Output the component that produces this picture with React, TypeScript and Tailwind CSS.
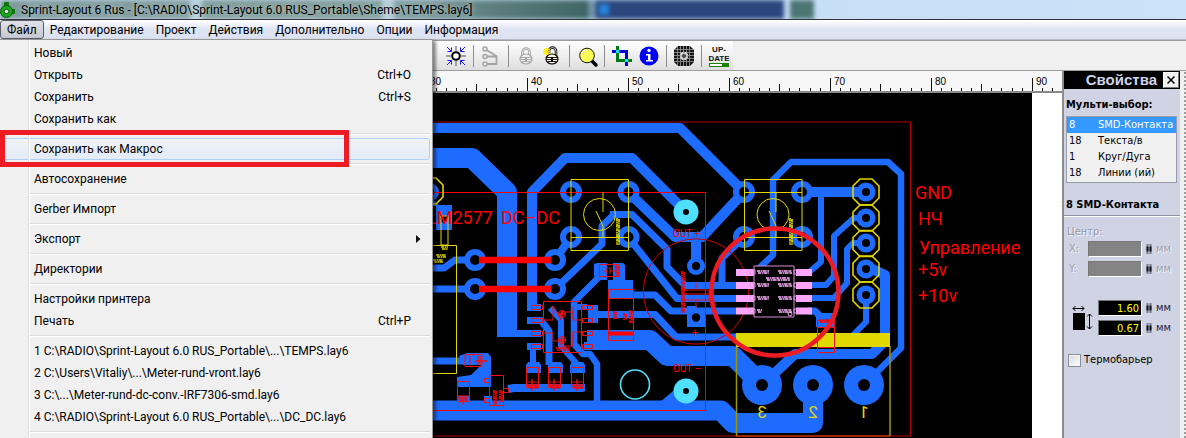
import type { ReactNode } from "react";

const menuBar = ["Файл", "Редактирование", "Проект", "Действия", "Дополнительно", "Опции", "Информация"];

type Item = { label: string; keys?: string; sub?: boolean; active?: boolean };

const fileMenu: Item[][] = [
  [
    { label: "Новый" },
    { label: "Открыть", keys: "Ctrl+O" },
    { label: "Сохранить", keys: "Ctrl+S" },
    { label: "Сохранить как" },
  ],
  [{ label: "Сохранить как Макрос", active: true }],
  [{ label: "Автосохранение" }],
  [{ label: "Gerber Импорт" }],
  [{ label: "Экспорт", sub: true }],
  [{ label: "Директории" }],
  [{ label: "Настройки принтера" }, { label: "Печать", keys: "Ctrl+P" }],
  [
    { label: "1 C:\\RADIO\\Sprint-Layout 6.0 RUS_Portable\\...\\TEMPS.lay6" },
    { label: "2 C:\\Users\\Vitaliy\\...\\Meter-rund-vront.lay6" },
    { label: "3 C:\\...\\Meter-rund-dc-conv.-IRF7306-smd.lay6" },
    { label: "4 C:\\RADIO\\Sprint-Layout 6.0 RUS_Portable\\...\\DC_DC.lay6" },
  ],
];

const selection = [
  ["8", "SMD-Контакта"],
  ["18", "Текста/в"],
  ["1", "Круг/Дуга"],
  ["18", "Линии (ий)"],
];

const BLUE = "#1e6bff";
const RED = "#f00";
const YEL = "#e0d800";

function TitleBar() {
  return (
    <header className="relative flex h-5 shrink-0 items-center overflow-hidden border-b border-[#30363c] bg-gradient-to-r from-[#cfe4f8] via-[#c3dcf6] to-[#cbe2f8]">
      <div className="absolute inset-0 flex blur-[2px]" aria-hidden="true">
        <div className="w-[190px] bg-[#7d999c]" />
        <div className="w-3 bg-[#b4cbd4]" />
        <div className="w-[180px] bg-[#7c9a97]" />
        <div className="w-3 bg-[#b4cbd4]" />
        <div className="w-[194px] bg-gradient-to-r from-[#7c9a9b] to-[#3f6664]" />
        <div className="w-[8px] bg-[#7090a8]" />
        <div className="w-[188px] bg-[#2b477c]" />
        <div className="w-[6px]" />
        <div className="w-[24px] bg-[#4c7673]" />
      </div>
      <div className="absolute inset-y-1 left-[599px] w-[10px] bg-[#2484dc] blur-[2px]" aria-hidden="true" />
      <svg className="relative shrink-0" width="16" height="18" viewBox="0 0 16 18" aria-hidden="true">
        <rect x="4" y="1" width="5" height="7" rx="1" fill="#0a7a0a" />
        <rect x="9" y="8" width="6" height="5" fill="#0a7a0a" />
        <circle cx="6.500" cy="10.500" r="6" fill="#18a818" stroke="#075b07" />
        <circle cx="6.500" cy="10.500" r="2.200" fill="#fff" stroke="#075b07" />
      </svg>
      <h1 className="relative ml-[5px] whitespace-nowrap text-[12px] leading-[18px] text-black [text-shadow:0_0_6px_#dfeaea]">
        Sprint-Layout 6 Rus - [C:\RADIO\Sprint-Layout 6.0 RUS_Portable\Sheme\TEMPS.lay6]
      </h1>
    </header>
  );
}

function FileMenu() {
  return (
    <div
      role="menu"
      aria-label="Файл"
      className="absolute left-0 top-[39px] z-10 w-[433px] border border-l-0 border-[#979797] bg-[#f0f0f0] pb-[5px] pr-[2px] pt-[2px] shadow-[3px_2px_3px_rgba(0,0,0,0.45)]"
    >
      {fileMenu.map((group, g) => (
        <div key={g}>
          {group.map((it) => (
            <button
              key={it.label}
              role="menuitem"
              className={
                it.active
                  ? "flex h-[22px] w-full items-center rounded-[3px] border border-[#aecff7] bg-gradient-to-b from-[#f0f3f8] to-[#e3ebf6] pl-[33px] pr-[18px] text-left"
                  : "flex h-[22px] w-full items-center pl-[34px] pr-[19px] text-left"
              }
            >
              <span className="flex-1 whitespace-nowrap">{it.label}</span>
              {it.keys && <span>{it.keys}</span>}
              {it.sub && (
                <svg className="-mr-[10px]" width="5" height="8" viewBox="0 0 5 8" aria-hidden="true">
                  <path d="M0 0L4.500 4L0 8Z" fill="#111" />
                </svg>
              )}
            </button>
          ))}
          <div className="flex h-2 items-center pl-[30px]">
            <div className="h-[2px] w-full border-b border-t border-b-white border-t-[#dcdcdc]" />
          </div>
        </div>
      ))}
      <div className="pointer-events-none absolute inset-y-0 left-[28px] w-[2px] border-l border-r border-l-[#dfdfdf] border-r-white" />
    </div>
  );
}

function Tool({ label, children }: { label: string; children: ReactNode }) {
  return (
    <button aria-label={label} className="flex h-6 w-6 items-center justify-center">
      <svg width="24" height="24" viewBox="0 0 24 24" fill="none" aria-hidden="true">
        {children}
      </svg>
    </button>
  );
}

const Sep = () => <div className="mx-[5px] h-[22px] w-px bg-[#8c8c8c]" />;

function Padlock({ color, body, open }: { color: string; body: string; open?: boolean }) {
  const shackle = open ? "M9 9V7a3.500 3.500 0 0 1 7 0v5" : "M8.500 12V8a3.500 3.500 0 0 1 7 0v4";
  return (
    <>
      <path d={shackle} stroke={color} strokeWidth="2.500" />
      <path d={shackle} stroke={body} strokeWidth=".8" />
      <ellipse cx="12" cy="15" rx="6" ry="5" fill={body} stroke={color} strokeWidth="1.200" />
      <path d="M6.500 13.500h11M6.500 15.500h11M7.500 17.500h9" stroke={color} strokeWidth=".9" />
      <path d="M12 13v5" stroke={color} strokeWidth="2" />
    </>
  );
}

function Toolbar() {
  return (
    <div className="flex h-[31px] shrink-0 items-stretch border-b border-t border-b-[#9c9c9c] border-t-[#9c9c9c] bg-[#f0f0f0]">
      <div className="flex items-center bg-gradient-to-b from-white to-[#dedede] pl-[444px] pr-[2px]">
        <Tool label="Центр">
          <path d="M12 2v5M12 17v5M2 12h5M17 12h5" stroke="#555" />
          <circle cx="12" cy="12" r="3.800" fill="#fff" stroke="#000" strokeWidth="2" />
          <path
            d="M3 3l4 4M7.500 3.500v4h-4M21 3l-4 4M16.500 3.500v4h4M3 21l4-4M7.500 20.500v-4h-4M21 21l-4-4M16.500 20.500v-4h4"
            stroke="#1414ff"
          />
        </Tool>
        <Sep />
        <Tool label="Трасса">
          <path d="M6 5l9 5.500M6 12.500h11.500V20H6" stroke="#a3a3a3" strokeWidth="1.800" />
          <path d="M15 10.500l2.500 2" stroke="#a3a3a3" strokeWidth="1.800" />
          <g fill="#eee" stroke="#a3a3a3" strokeWidth="1.500">
            <circle cx="6" cy="5" r="2" />
            <circle cx="6" cy="12.500" r="2" />
            <circle cx="6" cy="20" r="2" />
          </g>
        </Tool>
        <Sep />
        <Tool label="Блокировать">
          <Padlock color="#a3a3a3" body="#eee" />
        </Tool>
        <div className="w-[2px]" />
        <Tool label="Разблокировать">
          <Padlock color="#000" body="#fffbe0" open />
          <path d="M3 7.500h7M6.500 4v7M4 5l5 5M9 5l-5 5" stroke="#ffe600" strokeWidth="1.200" />
        </Tool>
        <Sep />
        <Tool label="Масштаб">
          <path d="M16 16l5 5" stroke="#000" strokeWidth="3.500" strokeLinecap="round" />
          <circle cx="12" cy="11.500" r="7.300" fill="#ffff5a" stroke="#111" />
          <path d="M7 9q2-3 5-3" stroke="#fff" />
        </Tool>
        <Sep />
        <Tool label="Обрезка">
          <path d="M2 7.500h14.500v10" stroke="#0000d8" strokeWidth="3" />
          <path d="M7.500 2v14.500H22" stroke="#007a18" strokeWidth="3" />
          <path d="M2 7.500h4M16.500 18v4" stroke="#0000d8" strokeWidth="3" />
          <path d="M6 6h3v3H6zM15 15h3v3h-3z" fill="#00f0ff" />
        </Tool>
        <div className="w-[3px]" />
        <Tool label="Информация">
          <circle cx="12" cy="12" r="9.500" fill="#0000f5" />
          <circle cx="12" cy="6.500" r="1.700" fill="#fff" />
          <path d="M9 10h4.500v6H16v1.500H9V16h2v-4.500H9z" fill="#fff" />
        </Tool>
        <Sep />
        <Tool label="Шаблон">
          <path d="M6 2h12l4 4v12l-4 4H6l-4-4V6z" fill="#161616" />
          <path
            d="M5.500 2v20M8.500 2v20M11.500 2v20M14.500 2v20M17.500 2v20M2 5.500h20M2 8.500h20M2 11.500h20M2 14.500h20M2 17.500h20"
            stroke="#9a9a9a"
            strokeWidth=".8"
          />
          <circle cx="12" cy="12" r="4.200" fill="#ddd" />
          <circle cx="12" cy="12" r="2" fill="#222" />
          <path d="M12 8v8M8 12h8" stroke="#777" strokeWidth=".7" />
        </Tool>
        <Sep />
        <button className="flex w-6 flex-col items-center font-['Liberation_Sans',sans-serif] text-[8px] font-bold leading-[9px] text-[#111]">
          <span className="block">UP-</span>
          <span className="block">DATE</span>
          <span className="flex h-[4px] w-5 border border-[#1a8000] bg-white">
            <span className="ml-auto w-[6px] bg-[#1a8000]" />
          </span>
        </button>
      </div>
    </div>
  );
}

function Ruler() {
  const ticks = Array.from({ length: 63 }, (_, i) => i);
  return (
    <svg className="block h-[22px] w-full shrink-0 border-b-2 border-[#8a8a8a] bg-[#f7f7f7]" aria-hidden="true">
      {ticks.map((i) => {
        const x = Math.round(425.7 + i * 10.1) + 0.5;
        const top = i % 10 === 0 ? 7 : i % 5 === 0 ? 13 : 17;
        return <path key={i} d={`M${x} ${top}V20`} stroke="#111" />;
      })}
      {[30, 40, 50, 60, 70, 80, 90].map((n, i) => (
        <text key={n} x={430 + i * 101} y="14" fontSize="10" fontFamily="Liberation Sans, sans-serif">
          {n}
        </text>
      ))}
    </svg>
  );
}

const traces: [string, number][] = [
  ["M420 128H680L744 192", 10],
  ["M420 158H472L507 192V337", 20],
  ["M507 333.500H541", 7],
  ["M532 311V192L565 158H632L686 212", 10],
  ["M628 192L675 237H702L744 192", 10],
  ["M696 237V267", 10],
  ["M629 214.500H614L602 226V244L555 289", 7],
  ["M610 214.500H632L667 249V267L685 285.500H736", 7],
  ["M628 237L677 298.500H736", 7],
  ["M620 295H655L671 311H736", 7],
  ["M590 314.500H655L676 337H742", 7],
  ["M600 340H650L667 356H733L762 385", 20],
  ["M420 410.500H721L733 423H813V390", 20],
  ["M662 408L686 388", 12],
  ["M762 385L795 354H872L885 341V275L866 266", 10],
  ["M864 385L901 348V174L888 162H791L773 180V255L755 272", 6.5],
  ["M802 192H866", 10],
  ["M821 192V262L808 273", 6],
  ["M866 218H854L834 236V276L826 285H808", 6],
  ["M866 243H853L847 249V283L834 298H808", 6],
  ["M866 295V322L853 335", 6],
  ["M808 311H815L822 318V327", 7],
  ["M744 237L722 258V287", 7],
  ["M571 237L555 260", 8],
  ["M430 268H444L455 260H475", 7],
  ["M430 289H475", 7],
  ["M430 361H468", 7],
  ["M529 320.500H541L549 331V365", 7],
  ["M533 346V366", 6],
  ["M550 308L561 320V346L577 364", 6],
  ["M601 275L574 302V344L583 354H590L597 364V402", 6.5],
  ["M508 389L514 388H583", 8],
  ["M444 205V230", 16],
];

const pads: [number, number, number, number][] = [
  [571, 192, 11, 5], [628.5, 192, 11, 5], [571, 237, 11, 5], [628.5, 237, 11, 5],
  [744, 192, 11, 5], [802, 192, 11, 5], [744, 237, 11, 5], [802, 237, 11, 5],
  [475, 260, 11, 5], [555, 260, 11, 5], [475, 289, 11, 5], [555, 289, 11, 5],
  [696, 266, 9, 4.2],
  [762, 385, 20, 6], [813, 385, 20, 6], [864, 385, 20, 6],
  [866, 192, 9.5, 4], [866, 218, 9.5, 4], [866, 243, 9.5, 4], [866, 269, 9.5, 4], [866, 295, 9.5, 4],
  [430, 192, 9, 4], [444, 219, 0, 3.5],
];

const Scribble = ({ x, y, w, v, c = RED }: { x: number; y: number; w: number; v?: boolean; c?: string }) => (
  <path
    d={v ? `M${x} ${y}v${w}M${x + 2} ${y + 1}v${w - 1}` : `M${x} ${y}h${w}M${x + 1} ${y + 2}h${w - 1}`}
    stroke={c}
    strokeWidth="1.700"
    strokeDasharray="3 .6 1.500 .5 4 .7"
  />
);

function Board() {
  return (
    <svg
      className="block h-[345px] w-[1032px] shrink-0 bg-black"
      viewBox="0 93 1032 345"
      fill="none"
      role="img"
      aria-label="Печатная плата"
    >
      <g stroke={BLUE} strokeLinejoin="round">
        {traces.map(([d, w]) => (
          <path key={d} d={d} strokeWidth={w} />
        ))}
      </g>
      <g fill={BLUE}>
        <path d="M459 356L467 353H488L491 357V387H457V377L471 375L481 365H463Z" />
        <path d="M457 396h13v5h-13zM484 396h8v6h-8z" />
        <path d="M527 304h14v7h-14zM527 317h14v7h-14zM527 343h14v7h-14z" />
        <path d="M588 305h10v18h-10zM587 330h46v20h-46z" />
        <path d="M594 264l3-1h10v17h-10l-3-4zM613 263h10l2 2v15h8v18h-25v-18h5z" />
        <path d="M526 365l2-3h11l2 3v8h-15zM548 365l2-3h11l2 3v8h-15zM570 365l2-3h11l2 3v8h-15z" />
        <path d="M526 384h59v7l-2 1h-55z" />
        <path d="M687 308h18v19h-18zM687 314h10v-8h-10zM816 313h19v14h-19z" />
        <path d="M574 304h13v6h-13zM584 342h14v8h-14zM430 197l10 9h-10z" />
      </g>
      {pads.map(([x, y, r, h], i) => (
        <g key={i}>
          <circle cx={x} cy={y} r={r} fill={BLUE} />
          <circle cx={x} cy={y} r={h} fill="#000" />
        </g>
      ))}
      <circle cx="696" cy="317.500" r="4.200" fill="#000" />

      {/* board outlines */}
      <path d="M430 122H910.500V436H430" stroke="#b00000" />
      <path d="M430 192.500H705.500V410.500H430" stroke={RED} />
      <path d="M479 260H551M479 289H551" stroke={RED} strokeWidth="6.500" />

      {/* yellow silkscreen */}
      <g stroke={YEL} strokeWidth="1">
        <path d="M571 179.500H628.500V250.500H571ZM571 237.500H628" />
        <path d="M744.500 179.500H802V250.500H744.500ZM744 192.500H802M744 237.500H802" />
        <circle cx="599.500" cy="214.500" r="16" />
        <circle cx="773" cy="214.500" r="16" />
        <path d="M603 192V212M596 211L603 226V237M776 192V212M769 211L776 226V237" />
        <path d="M430 245.500H456.500V373.500H430M441 216H448V245H441Z" />
        <path d="M736.500 333V436M890 346V436" stroke="#9c9600" strokeWidth="1.500" />
      </g>
      <path d="M736 436H890" stroke="#e04a00" />
      <g stroke={YEL} strokeWidth="1.600">
        <path d="M430 178H436L443 185V197L436 204H430" />
        {[192, 218, 243.5, 269, 295].map((y) => (
          <path key={y} d={`M860 ${y - 13}h12l7 7v12l-7 7h-12l-7-7v-12z`} />
        ))}
      </g>
      <Scribble x={617} y={218} w={27} v c={YEL} />
      <Scribble x={790} y={218} w={27} v c={YEL} />
      <Scribble x={441} y={247} w={7} c={YEL} />
      <Scribble x={436} y={255} w={10} c={YEL} />
      <Scribble x={433} y={260} w={10} c={YEL} />
      <path d="M736 333H890V347H736Z" fill={YEL} />

      {/* red silkscreen */}
      <g stroke="#f01010" strokeWidth="1">
        <path d="M543.500 301.500h38v51h-38zM465 354.500h17v12h-17zM457.500 381.500h12v20h-12zM489.500 375.500h14v30h-14z" />
        <path d="M484.500 378.500h5v4h-5zM484.500 398.500h5v4h-5zM503.500 388.500h5v4h-5z" />
        <path d="M526.500 367.500h12v20h-12zM548.500 367.500h12v20h-12zM571.500 367.500h12v20h-12z" />
        <path d="M526 382h12M548 382h12M571 382h12M457 396h12M470 354v12" />
        <path d="M531.500 305.500h11v4h-11zM531.500 318.500h11v4h-11zM531.500 331.500h11v4h-11zM531.500 344.500h11v4h-11z" />
        <path d="M582.500 305.500h10v4h-10zM582.500 318.500h10v4h-10zM582.500 331.500h10v4h-10zM582.500 344.500h10v4h-10z" />
        <path d="M543 320h10v-14l8 14v-8h12v8h9M543 333h10v8h8M561 341v5h12v-14h9M573 307v12M573 333v12" />
        <circle cx="562" cy="314" r="3.500" />
        <circle cx="562" cy="340" r="3.500" />
        <path d="M558 314h8M562 310v8M558 340h8M562 336v8" strokeWidth="1.500" />
        <path d="M599.500 264.500h20v12h-20zM607 267v7M610 267v7M603 271h4M610 271h5M608.500 289.500h25v51h-25zM608 298.500h25" />
        <path d="M817.500 320.500h17v32h-17zM817 327.500h17M817 347.500h17" />
        <path d="M696 282v7M683 290h26v10h-26zM683 294h26M696 300v8" />
        <path d="M463 397v8M527 385h11M532 379v12M549 385h11M554 379v12M572 385h11M577 379v12M478 356v9M480 356v9M475 361h12" strokeWidth="1.300" />
      </g>
      <circle cx="696" cy="291.500" r="52.700" stroke="#d00000" />
      <path d="M608 333.500H634" stroke={RED} strokeWidth="4" />
      <Scribble x={682} y={271} w={42} v />
      <Scribble x={614} y={311} w={8} v />
      <Scribble x={624} y={313} w={7} v />
      <Scribble x={630} y={310} w={13} v />
      <Scribble x={494} y={390} w={15} v />
      <Scribble x={500} y={390} w={12} v />
      <Scribble x={556} y={348} w={14} />
      <Scribble x={616} y={265} w={11} v />
      <Scribble x={458} y={398} w={10} />
      <Scribble x={528} y={386} w={10} />
      <Scribble x={550} y={386} w={10} />
      <Scribble x={573} y={386} w={10} />
      <Scribble x={819} y={320} w={13} />

      {/* selected SMD pads */}
      <g fill="#ffa6ff">
        <path d="M736 269h18v7h-18zM736 282h18v7h-18zM736 295h18v7h-18zM736 307.500h18v7h-18z" />
        <path d="M796 269h16v7h-16zM796 282h16v7h-16zM796 295h16v7h-16zM796 307.500h16v7h-16z" />
      </g>
      <path d="M754 266H794V317H754Z" fill="#000" stroke="#d68ad6" />
      <circle cx="790" cy="314" r="2" stroke="#ffa6ff" />
      {[272, 285, 298, 311].map((y) => (
        <g key={y} stroke="#e69ae6">
          <path d={`M750 ${y - 2}h5v4h-5zM794 ${y - 2}h5v4h-5z`} />
          <Scribble x={757} y={y - 1} w={y === 311 ? 5 : 12} c="#ffb4ff" />
          <Scribble x={778} y={y - 1} w={14} c="#ffb4ff" />
        </g>
      ))}
      <Scribble x={766} y={278} w={24} c="#ffb4ff" />

      {/* mounting holes */}
      <g fill="#50e0ff">
        <circle cx="686" cy="212" r="12.500" />
        <circle cx="686" cy="391" r="12.500" />
      </g>
      <circle cx="686" cy="212" r="3" fill="#000" />
      <circle cx="686" cy="391" r="3" fill="#000" />
      <circle cx="635" cy="384.500" r="14.500" stroke="#50e0ff" strokeWidth="1.600" />

      <g fill={RED} fontFamily="Roboto, Liberation Sans, sans-serif">
        <text x="427" y="224" fontSize="18">LM2577</text>
        <text x="501" y="224" fontSize="18">DC–DC</text>
        <text x="673" y="237" fontSize="10">OUT +</text>
        <text x="673" y="372" fontSize="10">OUT –</text>
        <text x="692" y="336" fontSize="10">+</text>
        <text x="915" y="199" fontSize="18">GND</text>
        <text x="918" y="225" fontSize="18">НЧ</text>
        <text x="919" y="254" fontSize="18">Управление</text>
        <text x="918" y="276" fontSize="18">+5v</text>
        <text x="918" y="302" fontSize="18">+10v</text>
      </g>
      <g fill={YEL} fontFamily="Roboto, Liberation Sans, sans-serif" fontSize="17" textAnchor="middle">
        <text transform="translate(762 418) scale(-1 1)">3</text>
        <text transform="translate(813 418) scale(-1 1)">2</text>
        <text transform="translate(864 418) scale(-1 1)">1</text>
      </g>
      <ellipse cx="775" cy="292" rx="63.500" ry="63.500" stroke="#ed1c24" strokeWidth="4.500" />
    </svg>
  );
}

const Knob = () => (
  <svg width="6" height="10" viewBox="0 0 6 10" aria-hidden="true">
    <path d="M1.500 0V10M4.500 0V10" stroke="#777c8c" strokeWidth="2" />
    <path d="M1.500 2.500V7.500M4.500 2.500V7.500" stroke="#10131c" strokeWidth="2" />
  </svg>
);

function Field({ label, value }: { label: string; value: string }) {
  return (
    <div className="flex h-5 items-center gap-1">
      <input
        aria-label={label}
        defaultValue={value}
        className="h-4 w-[44px] border border-b-white border-l-[#777] border-r-white border-t-[#777] bg-black pr-[2px] text-right text-[11px] leading-[14px] text-[#ffff00]"
      />
      <Knob />
      <span className="text-[11px] text-[#1c2038]">мм</span>
    </div>
  );
}

function Properties() {
  return (
    <aside className="flex w-[124px] shrink-0 border-l-2 border-[#8c8c8c] bg-[#f0f0f0] font-['DejaVu_Sans_Condensed','DejaVu_Sans',sans-serif] text-[11px] leading-4 text-black">
      <div className="flex w-[116px] flex-col bg-[#cfd3e3]">
        <div className="flex h-[18px] items-center justify-end bg-black pr-px">
          <h2 className="mr-[6px] font-['Liberation_Sans',sans-serif] text-[15px] font-bold text-[#cfd3e8]">Свойства</h2>
          <button
            aria-label="Закрыть"
            className="flex h-4 w-4 items-center justify-center border border-b-[#777] border-l-white border-r-[#777] border-t-white bg-[#f0f0f0]"
          >
            <svg width="8" height="8" viewBox="0 0 8 8" aria-hidden="true">
              <path d="M.5.5l7 7M7.500.5l-7 7" stroke="#000" strokeWidth="1.500" />
            </svg>
          </button>
        </div>
        <h3 className="pl-[2px] pt-[8px] font-bold">Мульти-выбор:</h3>
        <ul className="ml-[2px] mr-[3px] mt-[3px] border border-[#9a9da8] bg-[#f0f0f0] pb-px">
          {selection.map(([n, name], i) => (
            <li key={name} className={i === 0 ? "flex bg-[#3399ff] text-white" : "flex"}>
              <span className="w-[31px] pl-[2px]">{n}</span>
              <span className="whitespace-nowrap">{name}</span>
            </li>
          ))}
        </ul>
        <h3 className="mt-[14px] whitespace-nowrap border-b border-[#8f93a2] pb-[2px] pl-[2px] font-bold shadow-[0_1px_0_#fff]">
          8 SMD-Контакта
        </h3>
        <div className="mt-[9px] text-[#9a9ca6] [text-shadow:1px_1px_0_#f4f6ff]">
          <p className="pl-[3px] leading-[14px]">Центр:</p>
          {["X:", "Y:"].map((n) => (
            <label key={n} className="flex h-5 items-center gap-1 pl-[5px]">
              <span className="w-[15px]">{n}</span>
              <input
                disabled
                className="h-4 w-[54px] border border-b-white border-l-[#777] border-r-white border-t-[#777] bg-[#848484]"
              />
              <Knob />
              <span>мм</span>
            </label>
          ))}
        </div>
        <div className="mt-[19px] flex items-center gap-1 pl-[8px]">
          <svg width="22" height="28" viewBox="0 0 22 28" aria-hidden="true">
            <path d="M1 4.500H12M3.500 2L1 4.500L3.500 7M9.500 2L12 4.500L9.500 7M17.500 10V25M15 12.500L17.500 10L20 12.500M15 22.500L17.500 25L20 22.500" fill="none" stroke="#000" />
            <path d="M1 9H13V26H1Z" />
          </svg>
          <div>
            <Field label="Ширина" value="1.60" />
            <Field label="Высота" value="0.67" />
          </div>
        </div>
        <label className="mt-[14px] flex items-center gap-[3px] pl-1">
          <input
            type="checkbox"
            className="h-[13px] w-[13px] appearance-none border border-[#8a8f94] bg-gradient-to-br from-[#d4d8dc] to-white shadow-[inset_0_0_0_1px_#f4f4f4]"
          />
          Термобарьер
        </label>
      </div>
      <div className="ml-[3px] flex-1 bg-[radial-gradient(#9a9a9a_0.7px,transparent_1px)] bg-[length:4px_4px]" />
    </aside>
  );
}

export default function App() {
  return (
    <div className="relative flex min-h-screen flex-col overflow-hidden bg-[#f0f0f0] font-['Roboto','Noto_Sans',sans-serif] text-[12px] text-black">
      <TitleBar />
      <nav className="flex h-5 shrink-0 items-center border-b border-[#b6bac8] bg-gradient-to-b from-white via-[#dfe4f3] to-[#dde2f1]">
        {menuBar.map((m, i) => (
          <button
            key={m}
            className={
              i === 0
                ? "h-[19px] rounded-[3px] border border-[#5a5d66] bg-gradient-to-b from-[#e0e2ea] to-[#c4c7d2] px-[6px] leading-4"
                : "h-[19px] px-[6px] leading-4"
            }
          >
            {m}
          </button>
        ))}
      </nav>
      <Toolbar />
      <main className="flex flex-1">
        <section className="flex min-w-0 flex-1 flex-col overflow-hidden bg-white">
          <Ruler />
          <Board />
        </section>
        <Properties />
      </main>
      <FileMenu />
      <div className="pointer-events-none absolute left-0 top-[130px] z-20 h-[37px] w-[349px] border-[5px] border-[#ed1c24]" />
    </div>
  );
}
